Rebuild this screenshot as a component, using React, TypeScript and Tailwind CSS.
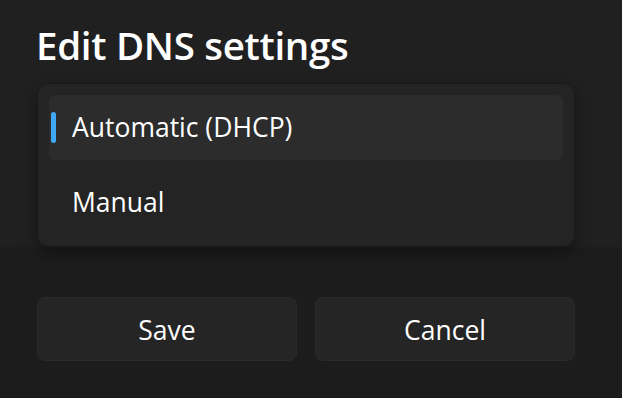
import { useState } from "react";

const FONT = { fontFamily: '"Open Sans", "Noto Sans", "Liberation Sans", sans-serif' };

const OPTIONS = ["Automatic (DHCP)", "Manual"];

export default function App() {
  const [selected, setSelected] = useState(0);

  return (
    <div className="w-[622px] h-[398px] overflow-hidden bg-[#1c1c1c] text-white" style={FONT}>
      {/* Dialog body */}
      <div className="relative h-[247px] bg-[#202020]">
        <h1 className="pl-[36px] pt-[21px] text-[38.5px] leading-[48px] font-semibold tracking-[-0.3px]">
          Edit DNS settings
        </h1>

        {/* Dropdown menu (overlays body/footer edge) */}
        <div className="absolute left-[37px] top-[83px] w-[538px] h-[164px] rounded-[12px] bg-[#242424] border border-[#1a1a1a] shadow-[0_6px_16px_rgba(0,0,0,0.35)] p-[11px] flex flex-col gap-[10px]">
          {OPTIONS.map((label, i) => (
            <button
              key={label}
              type="button"
              onClick={() => setSelected(i)}
              className={
                "relative h-[65px] rounded-[6px] flex items-center pl-[23px] pt-[1px] text-[26.5px] text-left " +
                (selected === i ? "bg-[#2c2c2c]" : "bg-transparent")
              }
            >
              {selected === i && (
                <span className="absolute left-[2px] top-[17px] w-[5px] h-[31px] rounded-full bg-[#3fa9f5]" />
              )}
              {label}
            </button>
          ))}
        </div>
      </div>

      {/* Footer */}
      <div className="flex gap-[18px] pl-[37px] pt-[50px]">
        <button type="button" className="w-[260px] h-[64px] rounded-[8px] bg-[#252525] border border-[#2a2a2a] pt-[3px] text-[26.5px]">
          Save
        </button>
        <button type="button" className="w-[260px] h-[64px] rounded-[8px] bg-[#252525] border border-[#2a2a2a] pt-[3px] text-[26.5px]">
          Cancel
        </button>
      </div>
    </div>
  );
}
